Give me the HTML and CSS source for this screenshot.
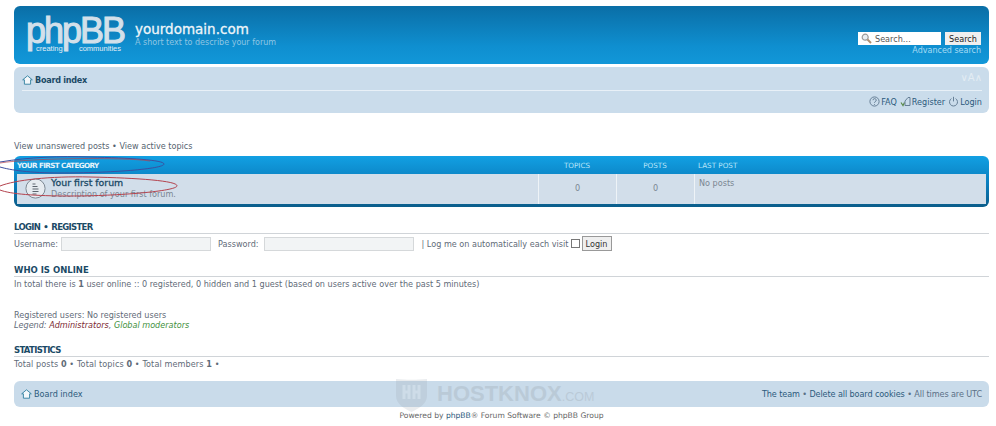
FILE: index.html
```html
<!doctype html>
<html lang="en">
  <head>
    <meta charset="UTF-8" />
    <title>yourdomain.com - Index page</title>
    <link rel="stylesheet" href="styles.css">
  </head>
  <body>
    <div class="wrap">
      <header class="headerbar">
        <div class="logo">
          <span class="logo-word">phpBB</span>
          <span class="logo-tag"><span>creating</span><span>communities</span></span>
        </div>
        <div class="site-desc">
          <h1>yourdomain.com</h1>
          <p>A short text to describe your forum</p>
        </div>
        <div class="search-box">
          <div class="search-row">
            <div class="search-input">
              <svg width="11" height="11" viewBox="0 0 11 11"><circle cx="4.2" cy="4.2" r="3" fill="#e8eef2" stroke="#9a9a9a" stroke-width="1.2"/><path d="M6.5 6.5l3.5 3.5" stroke="#b08f70" stroke-width="2"/></svg>
              <span>Search…</span>
            </div>
            <button class="search-btn">Search</button>
          </div>
          <a class="adv-link">Advanced search</a>
        </div>
      </header>

      <nav class="navbar">
        <div class="nav-top">
          <a class="crumb crumb-bold">
            <svg class="home" width="11" height="10" viewBox="0 0 11 10"><path d="M5.5 .8L10.3 4.8 8.6 4.8 8.6 9.2 2.4 9.2 2.4 4.8 .7 4.8Z" fill="#f4f8fb" stroke="#2f7f9f" stroke-width=".9"/></svg>
            Board index
          </a>
          <span class="font-size">&#8744;A&#8743;</span>
        </div>
        <div class="nav-links">
          <a><svg width="11" height="11" viewBox="0 0 11 11"><circle cx="5.5" cy="5.5" r="4.6" fill="none" stroke="#667f96"/><path d="M4 4.2a1.6 1.6 0 1 1 2.2 1.5c-.5.3-.7.5-.7 1.1M5.5 8v.8" fill="none" stroke="#667f96"/></svg>FAQ</a>
          <a><svg width="11" height="11" viewBox="0 0 11 11"><path d="M1 6.5l2 3 1.5-3" fill="none" stroke="#5a8a4a" stroke-width="1.2"/><path d="M5 9.5V5l3-3.5h2v8Z" fill="none" stroke="#667f96"/></svg>Register</a>
          <a><svg width="11" height="11" viewBox="0 0 11 11"><path d="M3.4 2.6a4 4 0 1 0 4.2 0" fill="none" stroke="#667f96"/><path d="M5.5 .8v4.6" stroke="#667f96"/></svg>Login</a>
        </div>
      </nav>

      <p class="search-links">View unanswered posts &bull; View active topics</p>

      <section class="forabg">
        <div class="fora-head">
          <span class="col-title">Your first category</span>
          <span class="col-num">Topics</span>
          <span class="col-num">Posts</span>
          <span class="col-last">Last post</span>
        </div>
        <div class="fora-row">
          <div class="col-title forum-cell">
            <svg class="forum-icon" width="21" height="21" viewBox="0 0 21 21"><circle cx="10.5" cy="10.5" r="9.6" fill="#e6ebf0" stroke="#7d8893"/><path d="M7.5 6h3M7.5 8.5h5M7.5 11h6M7.5 13.5h6M7.5 16h4" stroke="#5c656e"/></svg>
            <div>
              <a class="forum-name">Your first forum</a>
              <p class="forum-desc">Description of your first forum.</p>
            </div>
          </div>
          <div class="col-num cell">0</div>
          <div class="col-num cell">0</div>
          <div class="col-last cell last-cell">No posts</div>
        </div>
      </section>

      <section class="login-block">
        <h3>Login &bull; Register</h3>
        <div class="login-row">
          <label>Username:</label>
          <span class="field user-field"></span>
          <label class="pass-label">Password:</label>
          <span class="field pass-field"></span>
          <label class="auto-label">| Log me on automatically each visit</label>
          <span class="check"></span>
          <button class="login-btn">Login</button>
        </div>
      </section>

      <section class="online-block">
        <h3>Who is online</h3>
        <p>In total there is <b>1</b> user online :: 0 registered, 0 hidden and 1 guest (based on users active over the past 5 minutes)</p>
        <p class="registered">Registered users: No registered users</p>
        <p class="legend"><em>Legend: <span class="admin">Administrators</span>, <span class="mods">Global moderators</span></em></p>
      </section>

      <section class="stats-block">
        <h3>Statistics</h3>
        <p>Total posts <b>0</b> &bull; Total topics <b>0</b> &bull; Total members <b>1</b> &bull;</p>
      </section>

      <footer class="footbar">
        <a class="crumb">
          <svg class="home" width="11" height="10" viewBox="0 0 11 10"><path d="M5.5 .8L10.3 4.8 8.6 4.8 8.6 9.2 2.4 9.2 2.4 4.8 .7 4.8Z" fill="#f4f8fb" stroke="#2f7f9f" stroke-width=".9"/></svg>
          Board index
        </a>
        <span class="foot-links"><a>The team</a> &bull; <a>Delete all board cookies</a> &bull; All times are UTC</span>
      </footer>

      <p class="copyright">Powered by <a>phpBB</a>® Forum Software © phpBB Group</p>
    </div>

    <!-- hand-drawn marks and watermark on top of the shot -->
    <svg class="marks" width="996" height="426" viewBox="0 0 996 426">
      <path d="M0 162C30 157 60 156 90 157 130 158 164 160 164 164 164 169 110 173 60 173 30 173 10 170 0 167" fill="none" stroke="#3c4fa0"/>
      <path d="M0 163C30 158 125 157 150 161" fill="none" stroke="#b4434e" stroke-width=".7"/>
      <path d="M0 186C15 180 50 176 90 177 140 178 178 181 177 186 176 191 120 196 70 196 35 196 10 194 0 190" fill="none" stroke="#b4434e"/>
    </svg>
    <div class="watermark">
      <svg width="33" height="36" viewBox="0 0 33 36"><path d="M1 3C10 4 23 4 32 3V20C32 28 23 33 16.5 36 10 33 1 28 1 20Z" fill="#9aa5af" opacity=".45"/><path d="M9 9v14M14 9v14M9 16h5M19 9v14M24 9v14M19 16h5" stroke="#dfe6ec" stroke-width="3" opacity=".8"/></svg>
      <span class="wm-name">HOSTKNOX</span><span class="wm-com">.COM</span>
    </div>
  </body>
</html>
```

FILE: styles.css
```css
* {
  margin: 0;
  padding: 0;
  box-sizing: border-box;
}

body {
  background: #fff;
  color: #5f6b78;
  font-family: "DejaVu Sans", Verdana, sans-serif;
  font-size: 8.1px;
  overflow: hidden;
}

.wrap {
  width: 975px;
  margin: 0 0 0 14px;
  padding-top: 6px;
}

/* top banner */
.headerbar {
  display: flex;
  height: 58px;
  border-radius: 6px;
  background: linear-gradient(#0a6ea6, #0f8fd0 70%, #1297d8);
  color: #fff;
  padding: 0 8px 0 12px;
}

.logo {
  width: 100px;
  margin-right: 9px;
  padding-top: 8px;
}

.logo-word {
  display: block;
  font-family: "Liberation Sans", sans-serif;
  font-size: 36px;
  line-height: 34px;
  letter-spacing: -2px;
  color: #d3e0ea;
  -webkit-text-stroke: 1.1px #d3e0ea;
}

.logo-tag {
  display: flex;
  justify-content: space-between;
  padding: 0 5px 0 10px;
  margin-top: -4px;
  font-family: "Liberation Sans", sans-serif;
  font-size: 7.5px;
  line-height: 9px;
  color: #e4eef5;
}

.site-desc {
  flex: 1;
  padding-top: 16px;
}

.site-desc h1 {
  font-size: 13.5px;
  font-weight: normal;
  line-height: 15px;
  -webkit-text-stroke: .3px #e8f2f8;
  color: #f2f7fa;
}

.site-desc p {
  font-size: 8px;
  line-height: 12px;
  color: #8ec6e4;
}

.search-box {
  padding-top: 26px;
  text-align: right;
}

.search-row {
  display: flex;
  gap: 4px;
  justify-content: flex-end;
}

.search-input {
  display: flex;
  align-items: center;
  gap: 3px;
  width: 83px;
  height: 13px;
  padding-left: 3px;
  background: #fff;
  color: #555;
}

.search-btn {
  width: 36px;
  height: 13px;
  border: none;
  background: #efefef;
  color: #222;
  font: 8.1px "DejaVu Sans", sans-serif;
}

.adv-link {
  display: block;
  margin-top: 1px;
  font-size: 8px;
  color: #a6dcf5;
}

/* nav block */
.navbar {
  height: 46px;
  margin-top: 3px;
  padding: 0 7px 0 8px;
  border-radius: 6px;
  background: #cadceb;
}

.nav-top {
  display: flex;
  justify-content: space-between;
  align-items: center;
  height: 24px;
  padding-top: 3px;
  border-bottom: 1px solid #e8f0f7;
}

.crumb {
  display: flex;
  align-items: center;
  gap: 2px;
  color: #2c5a7c;
}

.crumb-bold {
  font-weight: bold;
  letter-spacing: -.25px;
  color: #1b4a66;
}

.font-size {
  padding-bottom: 5px;
  font-size: 10px;
  color: #e3ecf3;
}

.nav-links {
  display: flex;
  justify-content: flex-end;
  gap: 3px;
  margin-top: 5px;
  color: #2c5a7c;
}

.nav-links a {
  display: flex;
  align-items: center;
  gap: 1px;
}

.search-links {
  margin-top: 28px;
  line-height: 11px;
  color: #55636f;
}

/* forum table */
.forabg {
  height: 51px;
  margin-top: 4px;
  padding: 0 3px 3px;
  border-radius: 6px;
  background: linear-gradient(#12a0e3, #0a7dbd 55%, #0b5d8a);
}

.fora-head,
.fora-row {
  display: flex;
}

.fora-head {
  height: 18px;
  align-items: center;
  text-transform: uppercase;
  font-size: 7.2px;
  color: #b8e4f8;
}

.fora-head .col-title {
  font-weight: bold;
  color: #e6f4fb;
  letter-spacing: -.6px;
}

.col-title {
  width: 521px;
}

.col-num {
  width: 78px;
  text-align: center;
}

.col-last {
  flex: 1;
  padding-left: 4px;
}

.fora-row {
  height: 30px;
  background: #d2deea;
}

.forum-cell {
  display: flex;
  gap: 5px;
  padding: 3px 0 0 8px;
}

.forum-icon {
  margin-top: 1px;
}

.forum-name {
  display: block;
  font-size: 9.4px;
  line-height: 11px;
  color: #1b4a66;
  -webkit-text-stroke: .3px #1b4a66;
}

.forum-desc {
  margin-top: 1px;
  line-height: 11px;
  color: #7a8692;
}

.cell {
  border-left: 1px solid #eef3f7;
  line-height: 28px;
  color: #7a8692;
}

.last-cell {
  line-height: 18px;
}

/* lower sections */
h3 {
  font-size: 8.5px;
  line-height: 10px;
  padding-bottom: 1px;
  font-weight: bold;
  text-transform: uppercase;
  border-bottom: 1px solid #d0d4d8;
  color: #1b4a66;
}

.login-block {
  margin-top: 15px;
}

.login-block h3 {
  letter-spacing: -.7px;
  word-spacing: 1px;
}

.login-row {
  display: flex;
  align-items: center;
  margin-top: 2px;
}

.user-field {
  margin-left: 3px;
}

.pass-label {
  margin-left: 7px;
}

.pass-field {
  margin-left: 5px;
}

.field {
  width: 150px;
  height: 14px;
  border: 1px solid #d5d8da;
  background: #f2f4f5;
}

.auto-label {
  margin-left: 8px;
}

.check {
  width: 9px;
  height: 9px;
  margin-left: 2px;
  border: 1px solid #777;
  background: #fff;
}

.login-btn {
  width: 30px;
  height: 15px;
  margin-left: 2px;
  border: 1px solid #999;
  background: #efefef;
  color: #333;
  font: 8.1px "DejaVu Sans", sans-serif;
}

.online-block {
  margin-top: 14px;
}

.online-block p,
.stats-block p {
  line-height: 12px;
}

.online-block h3 + p {
  margin-top: 1px;
}

.online-block .registered {
  margin-top: 20px;
  line-height: 10px;
}

.online-block .legend {
  line-height: 10px;
}

.admin {
  color: #7d2a33;
}

.mods {
  color: #3f9140;
}

.stats-block {
  margin-top: 15px;
}

.stats-block h3 {
  letter-spacing: -.7px;
}

.stats-block p {
  margin-top: 1px;
  letter-spacing: .1px;
}

.footbar {
  display: flex;
  justify-content: space-between;
  align-items: center;
  height: 26px;
  margin-top: 11px;
  padding: 0 7px;
  border-radius: 6px;
  background: #c9dbea;
  color: #5b7086;
}

.foot-links {
  letter-spacing: -.1px;
}

.foot-links a {
  color: #2c5a7c;
}

.copyright {
  margin-top: 3px;
  text-align: center;
  font-size: 7.6px;
  line-height: 11px;
  color: #666;
}

.copyright a {
  color: #2c5a7c;
}

/* overlays */
.marks {
  position: absolute;
  left: 0;
  top: 0;
  pointer-events: none;
}

.watermark {
  position: absolute;
  left: 395px;
  top: 376px;
  display: flex;
  align-items: center;
  gap: 9px;
  font-family: "Liberation Sans", sans-serif;
  font-weight: bold;
  color: #a9b6c2;
  opacity: .45;
}

.wm-name {
  font-size: 22px;
}

.wm-com {
  margin-left: -9px;
  padding-top: 5px;
  font-size: 12.5px;
  font-weight: normal;
}
```
